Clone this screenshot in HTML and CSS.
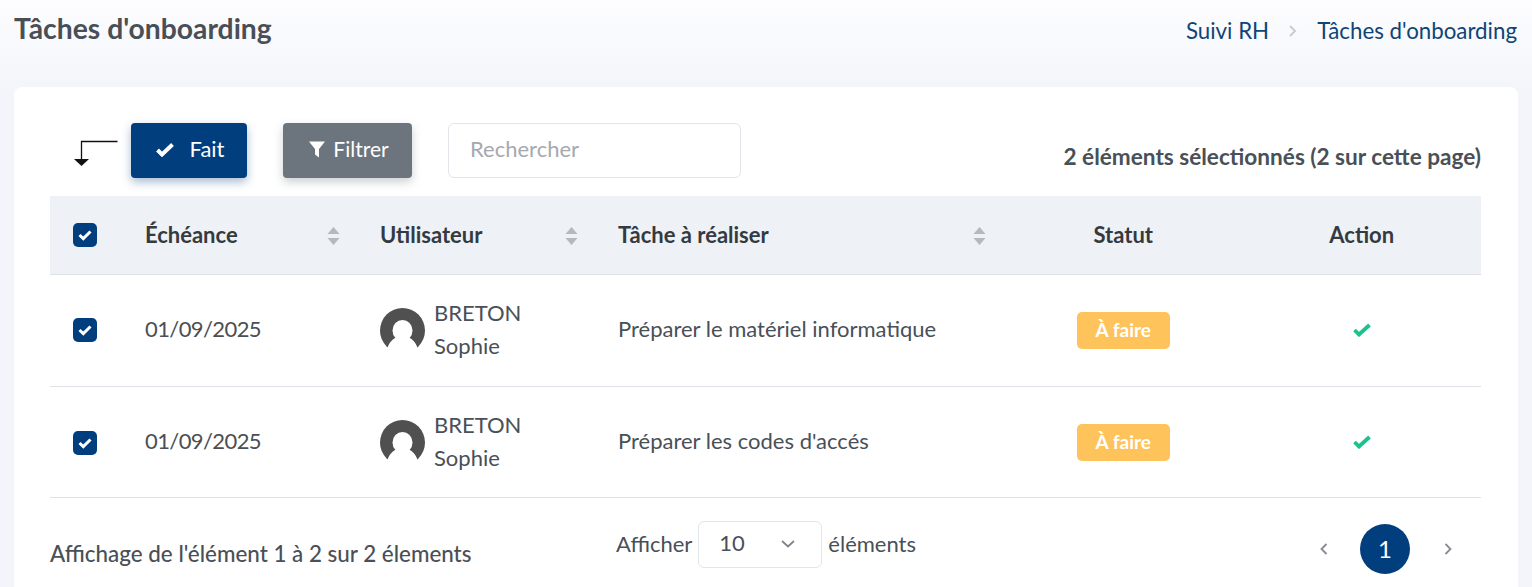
FILE: index.html
```html
<!DOCTYPE html>
<html lang="fr">
<head>
<meta charset="utf-8">
<title>Tâches d'onboarding</title>
<link rel="stylesheet" href="styles.css">
</head>
<body>
<header class="page-head">
  <h1 class="page-title">Tâches d'onboarding</h1>
  <nav class="crumbs">
    <a class="crumb">Suivi RH</a>
    <svg class="crumb-sep" viewBox="0 0 10 14"><path d="M2 2l5 5-5 5" fill="none" stroke="#c9ccd3" stroke-width="2"/></svg>
    <a class="crumb">Tâches d'onboarding</a>
  </nav>
</header>
<main class="card">
  <div class="toolbar">
    <svg class="bulk-arrow" viewBox="0 0 44 26"><path d="M43.500 1.500H7.500V20" fill="none" stroke="#111" stroke-width="1.300"/><path d="M0 19h15l-7.500 7z" fill="#111"/></svg>
    <button class="btn btn-primary">
      <svg class="btn-check" viewBox="0 0 18 14"><path d="M1.500 7l4.500 4.500L16.500 1.500" fill="none" stroke="#fff" stroke-width="4"/></svg>
      <span class="btn-label">Fait</span>
    </button>
    <button class="btn btn-grey">
      <svg class="btn-filter" viewBox="0 0 16 16"><path d="M0 0h16L10 7.500V16L6 13V7.500z" fill="#fff"/></svg>
      <span class="btn-label">Filtrer</span>
    </button>
    <div class="search"><span class="btn-label">Rechercher</span></div>
    <div class="selection">2 éléments sélectionnés (2 sur cette page)</div>
  </div>
  <table class="grid">
    <thead>
      <tr>
        <th class="c-check"><span class="box"><svg viewBox="0 0 14 12"><path d="M1.500 6l3.800 3.600L12.500 2.500" fill="none" stroke="#fff" stroke-width="3"/></svg></span></th>
        <th class="c-date"><div class="th-in">Échéance<svg class="sort" viewBox="0 0 12 18"><path d="M6 0l6 7H0zM6 18l6-7H0z" fill="#b4b8bf"/></svg></div></th>
        <th class="c-user"><div class="th-in">Utilisateur<svg class="sort" viewBox="0 0 12 18"><path d="M6 0l6 7H0zM6 18l6-7H0z" fill="#b4b8bf"/></svg></div></th>
        <th class="c-task"><div class="th-in">Tâche à réaliser<svg class="sort" viewBox="0 0 12 18"><path d="M6 0l6 7H0zM6 18l6-7H0z" fill="#b4b8bf"/></svg></div></th>
        <th class="c-center">Statut</th>
        <th class="c-center">Action</th>
      </tr>
    </thead>
    <tbody>
      <tr>
        <td class="c-check"><span class="box"><svg viewBox="0 0 14 12"><path d="M1.500 6l3.800 3.600L12.500 2.500" fill="none" stroke="#fff" stroke-width="3"/></svg></span></td>
        <td class="c-text c-num">01/09/2025</td>
        <td class="c-person"><div class="user">
          <svg class="avatar" viewBox="0 0 45 45"><circle cx="22.500" cy="22.500" r="22.500" fill="#505050"/><ellipse cx="22.500" cy="22.500" rx="10" ry="10.500" fill="#fff"/><path d="M7 42c1-6 5-11 10-13 3 1.500 8 1.500 11 0 5 2 9 7 10 13z" fill="#fff"/><rect x="0" y="41.500" width="45" height="4" fill="#fff"/></svg>
          <div class="user-name">BRETON<br>Sophie</div>
        </div></td>
        <td class="c-text">Préparer le matériel informatique</td>
        <td class="c-center"><span class="badge">À faire</span></td>
        <td class="c-center c-ok"><svg class="ok" viewBox="0 0 18 14"><path d="M1.500 7l4.500 4.500L16.500 2" fill="none" stroke="#1bc28d" stroke-width="3.800"/></svg></td>
      </tr>
      <tr>
        <td class="c-check"><span class="box"><svg viewBox="0 0 14 12"><path d="M1.500 6l3.800 3.600L12.500 2.500" fill="none" stroke="#fff" stroke-width="3"/></svg></span></td>
        <td class="c-text c-num">01/09/2025</td>
        <td class="c-person"><div class="user">
          <svg class="avatar" viewBox="0 0 45 45"><circle cx="22.500" cy="22.500" r="22.500" fill="#505050"/><ellipse cx="22.500" cy="22.500" rx="10" ry="10.500" fill="#fff"/><path d="M7 42c1-6 5-11 10-13 3 1.500 8 1.500 11 0 5 2 9 7 10 13z" fill="#fff"/><rect x="0" y="41.500" width="45" height="4" fill="#fff"/></svg>
          <div class="user-name">BRETON<br>Sophie</div>
        </div></td>
        <td class="c-text">Préparer les codes d'accés</td>
        <td class="c-center"><span class="badge">À faire</span></td>
        <td class="c-center c-ok"><svg class="ok" viewBox="0 0 18 14"><path d="M1.500 7l4.500 4.500L16.500 2" fill="none" stroke="#1bc28d" stroke-width="3.800"/></svg></td>
      </tr>
    </tbody>
  </table>
  <footer class="foot">
    <div class="foot-info">Affichage de l'élément 1 à 2 sur 2 élements</div>
    <div class="foot-size">
      <span>Afficher</span>
      <div class="select"><span>10</span><svg class="chev" viewBox="0 0 14 8"><path d="M1 1l6 5.500L13 1" fill="none" stroke="#7d838b" stroke-width="1.700"/></svg></div>
      <span>éléments</span>
    </div>
    <div class="pager">
      <svg class="pg-arrow" viewBox="0 0 8 12"><path d="M6.500 1L1.500 6l5 5" fill="none" stroke="#868b92" stroke-width="1.800"/></svg>
      <span class="pg-num">1</span>
      <svg class="pg-arrow" viewBox="0 0 8 12"><path d="M1.500 1l5 5-5 5" fill="none" stroke="#868b92" stroke-width="1.800"/></svg>
    </div>
  </footer>
</main>
</body>
</html>
```
FILE: styles.css
```css
* { box-sizing: border-box; }
html, body { height: 100%; }
body {
  margin: 0;
  height: 587px;
  overflow: hidden;
  background: linear-gradient(180deg, #fdfdff 0, #f3f5fa 90px);
  font-family: Lato, "Noto Sans", sans-serif;
  font-size: 22px;
  color: #495057;
  padding: 0 14px;
}
.page-head {
  height: 87px;
  display: flex;
  justify-content: space-between;
  align-items: flex-start;
  margin-right: 1px;
}
.page-title {
  margin: 10px 0 0;
  font-size: 28.300px;
  line-height: 36px;
  font-weight: 700;
  color: #4a4f55;
}
.crumbs {
  display: flex;
  align-items: center;
  gap: 19px;
  margin-top: 15px;
  font-size: 22.300px;
  line-height: 32px;
  color: #0f4576;
  white-space: nowrap;
}
.crumb-sep { width: 10px; height: 14px; }
.card {
  background: #fff;
  border-radius: 8px;
  height: 520px;
  padding: 36px 37px 0 36px;
}
.toolbar {
  display: flex;
  align-items: center;
  height: 55px;
  margin-bottom: 18px;
}
.bulk-arrow { width: 44px; height: 26px; margin: 0 13px 0 24px; flex: none; position: relative; top: 2px; }
.btn {
  height: 55px;
  border: 0;
  border-radius: 4px;
  color: #fff;
  font: inherit;
  display: flex;
  align-items: center;
  justify-content: center;
}
.btn-label { position: relative; top: -2px; }
.btn-primary {
  width: 116px;
  gap: 16px;
  padding-left: 8px;
  background: #003e7e;
  box-shadow: 0 4px 10px rgba(0, 62, 126, .35);
}
.btn-grey {
  width: 129px;
  gap: 8px;
  margin-left: 36px;
  padding-left: 9px;
  font-size: 21px;
  background: #6c757d;
  box-shadow: 0 4px 10px rgba(108, 117, 125, .35);
}
.btn-check { width: 18px; height: 14px; position: relative; top: -1px; }
.btn-filter { width: 16px; height: 17px; position: relative; top: -1px; }
.search {
  width: 293px;
  height: 55px;
  margin-left: 36px;
  padding: 0 21px;
  display: flex;
  align-items: center;
  border: 1px solid #e2e5e9;
  border-radius: 6px;
  color: #a4a9b0;
}
.selection {
  margin-left: auto;
  font-size: 22.600px;
  font-weight: 700;
  position: relative;
  top: 6px;
  white-space: nowrap;
}
.grid {
  width: 1431px;
  border-collapse: collapse;
  table-layout: fixed;
}
.grid th {
  height: 78px;
  background: #eef1f6;
  color: #343a40;
  font-weight: 700;
  text-align: left;
  padding: 0 18px 0 22px;
  border-bottom: 1px solid #dee2e6;
}
.grid td {
  height: 112px;
  padding: 0 18px 0 22px;
  border-bottom: 1px solid #dee2e6;
}
.grid tbody tr:last-child td { height: 111px; padding-top: 2px; }
.grid td.c-text { padding-bottom: 4px; }
.grid tbody tr:last-child td.c-text { padding-top: 0; padding-bottom: 3px; }
.grid .c-num { letter-spacing: -.6px; }
.grid .c-check { width: 73px; padding: 0 0 0 23px; }
.c-date { width: 235px; }
.c-user { width: 238px; }
.c-task { width: 408px; }
.grid .c-center { text-align: center; padding: 0; }
.grid td.c-ok { padding-bottom: 6px; }
.th-in { display: flex; justify-content: space-between; align-items: center; }
.sort { width: 13px; height: 18px; position: relative; top: 1px; }
.box {
  display: flex;
  align-items: center;
  justify-content: center;
  width: 24px;
  height: 24px;
  border-radius: 5px;
  background: #003e7e;
}
.box svg { width: 14px; height: 12px; }
.user { display: flex; align-items: center; gap: 9px; }
.avatar { width: 45px; height: 45px; flex: none; }
.user-name { line-height: 33px; margin-top: -2px; }
tbody tr:last-child .user-name { margin-top: -4px; }
.badge {
  display: inline-block;
  width: 93px;
  height: 37px;
  line-height: 35px;
  border-radius: 5px;
  background: #ffc35c;
  color: #fff;
  font-size: 19px;
  font-weight: 700;
  vertical-align: middle;
}
.ok { width: 18px; height: 14px; vertical-align: middle; }
.foot { position: relative; display: flex; justify-content: space-between; align-items: center; height: 90px; }
.foot-info { font-size: 22.400px; font-weight: 500; position: relative; top: 11px; white-space: nowrap; }
.foot-size {
  position: absolute;
  left: 566px;
  top: 23px;
  display: flex;
  align-items: center;
  gap: 6px;
  font-size: 22px;
}
.foot-size > span { position: relative; top: -1px; }
.select {
  width: 124px;
  height: 47px;
  border: 1px solid #e2e5e9;
  border-radius: 6px;
  padding: 0 26px 0 20px;
  display: flex;
  align-items: center;
  justify-content: space-between;
}
.select span { position: relative; top: -2px; }
.chev { width: 14px; height: 8px; }
.pager { display: flex; align-items: center; gap: 32px; margin-right: 29px; position: relative; top: 6px; }
.pg-arrow { width: 8px; height: 12px; }
.pg-num {
  width: 50px;
  height: 50px;
  margin-right: 2px;
  border-radius: 50%;
  background: #003e7e;
  color: #fff;
  font-size: 24px;
  display: flex;
  align-items: center;
  justify-content: center;
}
```
